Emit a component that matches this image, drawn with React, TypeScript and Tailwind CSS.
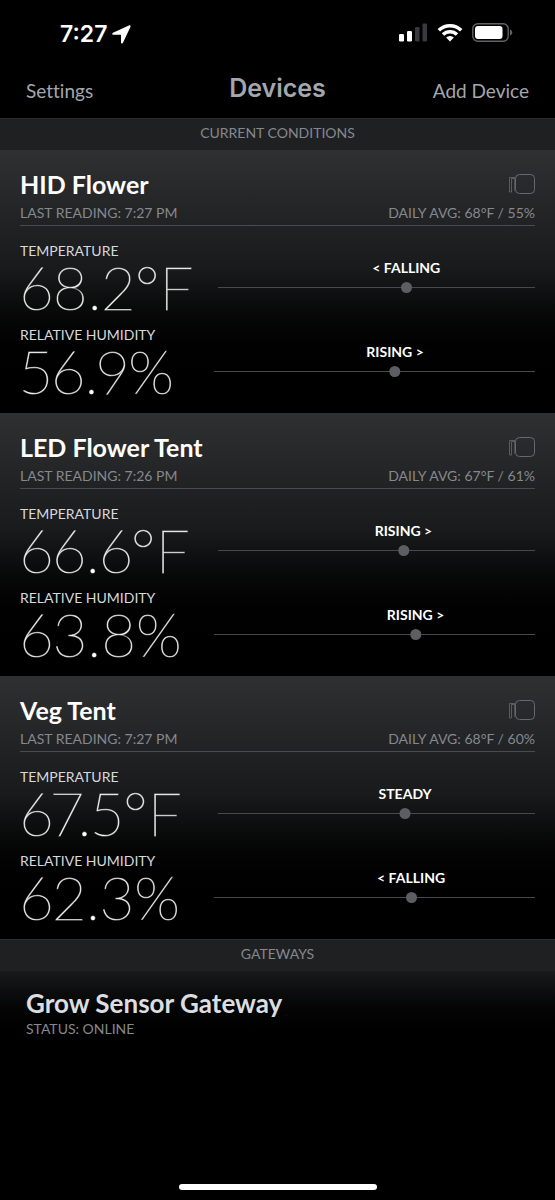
import React from "react";

type Reading = {
  label: string;
  value: string;
  trend: string;
  position: number;
};

type Device = {
  name: string;
  time: string;
  average: string;
  temperature: Reading;
  humidity: Reading;
};

const temperature = (value: string, trend: string, position: number): Reading => ({
  label: "Temperature",
  value,
  trend,
  position,
});

const humidity = (value: string, trend: string, position: number): Reading => ({
  label: "Relative Humidity",
  value,
  trend,
  position,
});

const devices: Device[] = [
  {
    name: "HID Flower",
    time: "7:27 PM",
    average: "68°F / 55%",
    temperature: temperature("68.2°F", "< Falling", 59.4),
    humidity: humidity("56.9%", "Rising >", 56.4),
  },
  {
    name: "LED Flower Tent",
    time: "7:26 PM",
    average: "67°F / 61%",
    temperature: temperature("66.6°F", "Rising >", 58.5),
    humidity: humidity("63.8%", "Rising >", 62.8),
  },
  {
    name: "Veg Tent",
    time: "7:27 PM",
    average: "68°F / 60%",
    temperature: temperature("67.5°F", "Steady", 59),
    humidity: humidity("62.3%", "< Falling", 61.4),
  },
];

function StatusBar() {
  return (
    <div className="flex h-16 items-center justify-between pr-[42px] pl-[60px]">
      <div className="flex items-center gap-[5px] pt-1">
        <span className="font-[Inter,sans-serif] text-[23px] leading-7 font-semibold text-white">7:27</span>
        <svg width="19" height="19" viewBox="0 0 19 19" fill="#fff" aria-hidden="true">
          <path d="M16.9.5 1 7.7C-.2 8.3.1 9.8 1.4 9.8H8.4c.4 0 .6.2.6.6v6.8c0 1.4 1.5 1.7 2.1.4L18.4 1.9C18.8.8 18 0 16.9.5Z" />
        </svg>
      </div>
      <div className="flex items-center gap-[9px] pt-[1px]">
        <svg width="29" height="19" viewBox="0 0 29 19" fill="#fff" aria-hidden="true">
          <rect x="0" y="11" width="5" height="7.5" rx="1.3" />
          <rect x="8" y="8" width="5" height="10.5" rx="1.3" />
          <rect x="16" y="4" width="4.5" height="14.5" rx="1.3" fill="#38393b" />
          <rect x="23.5" y="0.5" width="4.5" height="18" rx="1.3" fill="#38393b" />
        </svg>
        <svg width="26" height="19" viewBox="0 0 26 19" aria-hidden="true">
          <g fill="none" stroke="#fff" strokeWidth="3.5">
            <path d="M1.8 7.3a15.8 15.8 0 0 1 22.4 0" />
            <path d="M6 11.6a9.9 9.9 0 0 1 14 0" />
          </g>
          <path d="M13 18.5 9.1 14.6a5.5 5.5 0 0 1 7.8 0Z" fill="#fff" />
        </svg>
        <svg width="41" height="19" viewBox="0 0 41 19" aria-hidden="true">
          <rect x="0.8" y="0.8" width="35.4" height="17.4" rx="5" fill="none" stroke="#606266" strokeWidth="1.4" />
          <rect x="3" y="3" width="27.5" height="13" rx="3" fill="#fff" />
          <path d="M38 6.5c3 .8 3 5.2 0 6Z" fill="#606266" />
        </svg>
      </div>
    </div>
  );
}

function SensorIcon() {
  return (
    <svg width="27" height="22" viewBox="0 0 27 22" fill="none" stroke="#66686f" aria-hidden="true">
      <rect x="7.5" y="1.5" width="19" height="19" rx="4" />
      <path d="M7 5.5H3.5V19H1.5V4.5H7" strokeWidth="0.8" />
      <path d="M6.5 5v13" strokeWidth="0.6" />
    </svg>
  );
}

function ReadingRow({ reading, trackStart }: { reading: Reading; trackStart: string }) {
  return (
    <div className="flex h-[84px]">
      <div className={`shrink-0 ${trackStart}`}>
        <div className="text-[14px] leading-5 whitespace-nowrap text-[#d6d8dc] uppercase">{reading.label}</div>
        <div className="text-[60px] leading-[52px] font-thin whitespace-nowrap text-white proportional-nums [-webkit-text-stroke:1px_#ffffff80]">
          {reading.value}
        </div>
      </div>
      <div className="relative mt-[46px] h-px flex-1 bg-[#48494d]">
        <div
          className="absolute bottom-[-5px] flex -translate-x-1/2 flex-col items-center gap-[4px]"
          style={{ left: `${reading.position}%` }}
        >
          <span className="text-[14px] leading-5 font-bold whitespace-nowrap text-white uppercase">
            {reading.trend}
          </span>
          <span className="size-[11px] rounded-full bg-[#5c5e64]" />
        </div>
      </div>
    </div>
  );
}

function DeviceCard({ device }: { device: Device }) {
  return (
    <article className="bg-linear-to-b from-[#2f3032] via-[#191a1b] via-45% to-black to-90% px-5 pt-5 pb-1">
      <div className="flex items-start justify-between">
        <h2 className="text-[25px] leading-7 font-bold text-white">{device.name}</h2>
        <div className="pt-[3px]">
          <SensorIcon />
        </div>
      </div>
      <div className="flex justify-between border-b border-[#4a4b4f] pt-[5px] pb-[2px] text-[14px] leading-5 text-[#85888f] uppercase">
        <span>Last reading: {device.time}</span>
        <span>Daily avg: {device.average}</span>
      </div>
      <div className="pt-[15px]">
        <ReadingRow reading={device.temperature} trackStart="w-[198px]" />
        <ReadingRow reading={device.humidity} trackStart="w-[194px]" />
      </div>
    </article>
  );
}

function SectionTitle({ children }: { children: React.ReactNode }) {
  return (
    <h2 className="border-t border-[#2c2d2f] bg-[#1f2022] pt-1 pb-[7px] text-center text-[14px] leading-5 text-[#85888f] uppercase">
      {children}
    </h2>
  );
}

export default function App() {
  return (
    <div className="flex min-h-screen flex-col bg-black font-[Lato,sans-serif] [font-variant-ligatures:no-common-ligatures]">
      <StatusBar />
      <header className="grid h-[54px] grid-cols-[1fr_auto_1fr] items-center px-[26px]">
        <button type="button" className="justify-self-start text-[19px] leading-6 text-[#a4a7ad]">
          Settings
        </button>
        <h1 className="pb-[6px] font-[Inter,sans-serif] text-[25px] leading-8 font-semibold text-[#a4a7ad]">Devices</h1>
        <button type="button" className="justify-self-end text-[19px] leading-6 text-[#a4a7ad]">
          Add Device
        </button>
      </header>
      <main>
        <SectionTitle>Current Conditions</SectionTitle>
        {devices.map((device) => (
          <DeviceCard key={device.name} device={device} />
        ))}
        <SectionTitle>Gateways</SectionTitle>
        <article className="bg-linear-to-b from-[#191a1b] to-black px-[26px] pt-4 pb-[10px]">
          <h2 className="text-[26px] leading-8 font-bold text-[#dcdde1]">Grow Sensor Gateway</h2>
          <p className="text-[14px] leading-5 text-[#85888f] uppercase">Status: Online</p>
        </article>
      </main>
      <div className="mt-auto flex justify-center pb-[10px]">
        <div className="h-[6px] w-[198px] rounded-full bg-white" />
      </div>
    </div>
  );
}
